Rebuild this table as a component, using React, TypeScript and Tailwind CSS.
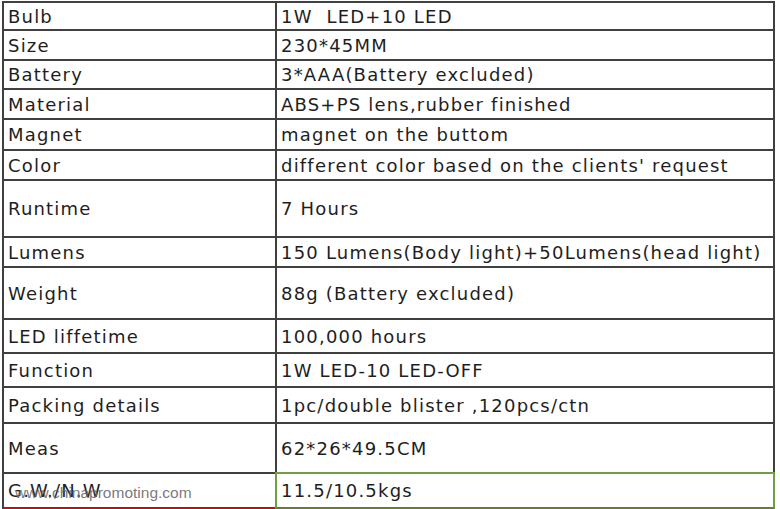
const rows: { label: string; value: string; h: number }[] = [
  { label: "Bulb", value: "1W  LED+10 LED", h: 28 },
  { label: "Size", value: "230*45MM", h: 30 },
  { label: "Battery", value: "3*AAA(Battery excluded)", h: 29 },
  { label: "Material", value: "ABS+PS lens,rubber finished", h: 30 },
  { label: "Magnet", value: "magnet on the buttom", h: 31 },
  { label: "Color", value: "different color based on the clients' request", h: 30 },
  { label: "Runtime", value: "7 Hours", h: 57 },
  { label: "Lumens", value: "150 Lumens(Body light)+50Lumens(head light)", h: 30 },
  { label: "Weight", value: "88g (Battery excluded)", h: 52 },
  { label: "LED liffetime", value: "100,000 hours", h: 34 },
  { label: "Function", value: "1W LED-10 LED-OFF", h: 34 },
  { label: "Packing details", value: "1pc/double blister ,120pcs/ctn", h: 36 },
  { label: "Meas", value: "62*26*49.5CM", h: 50 },
];

export default function App() {
  return (
    <div className="w-[780px] h-[509px] overflow-hidden bg-white pt-[1px] pl-[2px] text-[18px] tracking-[1.2px] text-[#1e1e1e] font-['DejaVu_Sans',sans-serif]">
      <div className="relative w-[773px] border-t-2 border-l-2 border-[#404040]">
        {rows.map((r) => (
          <div key={r.label} className="flex" style={{ height: r.h }}>
            <div className="w-[273px] flex items-center pl-[4px] border-r-2 border-b-2 border-[#404040] whitespace-pre">
              {r.label}
            </div>
            <div className="flex-1 flex items-center pl-[4px] border-r-2 border-b-2 border-[#404040] whitespace-pre">
              {r.value}
            </div>
          </div>
        ))}
        <div className="flex h-[35px]">
          <div className="w-[273px] flex items-center pl-[4px] border-r-2 border-b-2 border-b-[#c01010] border-r-[#404040] whitespace-pre">
            G.W./N.W
          </div>
          <div className="flex-1 flex items-center pl-[4px] border-2 border-[#6fa040] border-b-[#6b7a2a] -mt-[2px] -ml-[2px] whitespace-pre">
            11.5/10.5kgs
          </div>
        </div>
        <div className="absolute left-[11px] top-[478px] text-[15.5px] tracking-normal text-[#6a6a6a]/90 font-['Liberation_Sans',sans-serif]">
          www.chinapromoting.com
        </div>
      </div>
    </div>
  );
}
